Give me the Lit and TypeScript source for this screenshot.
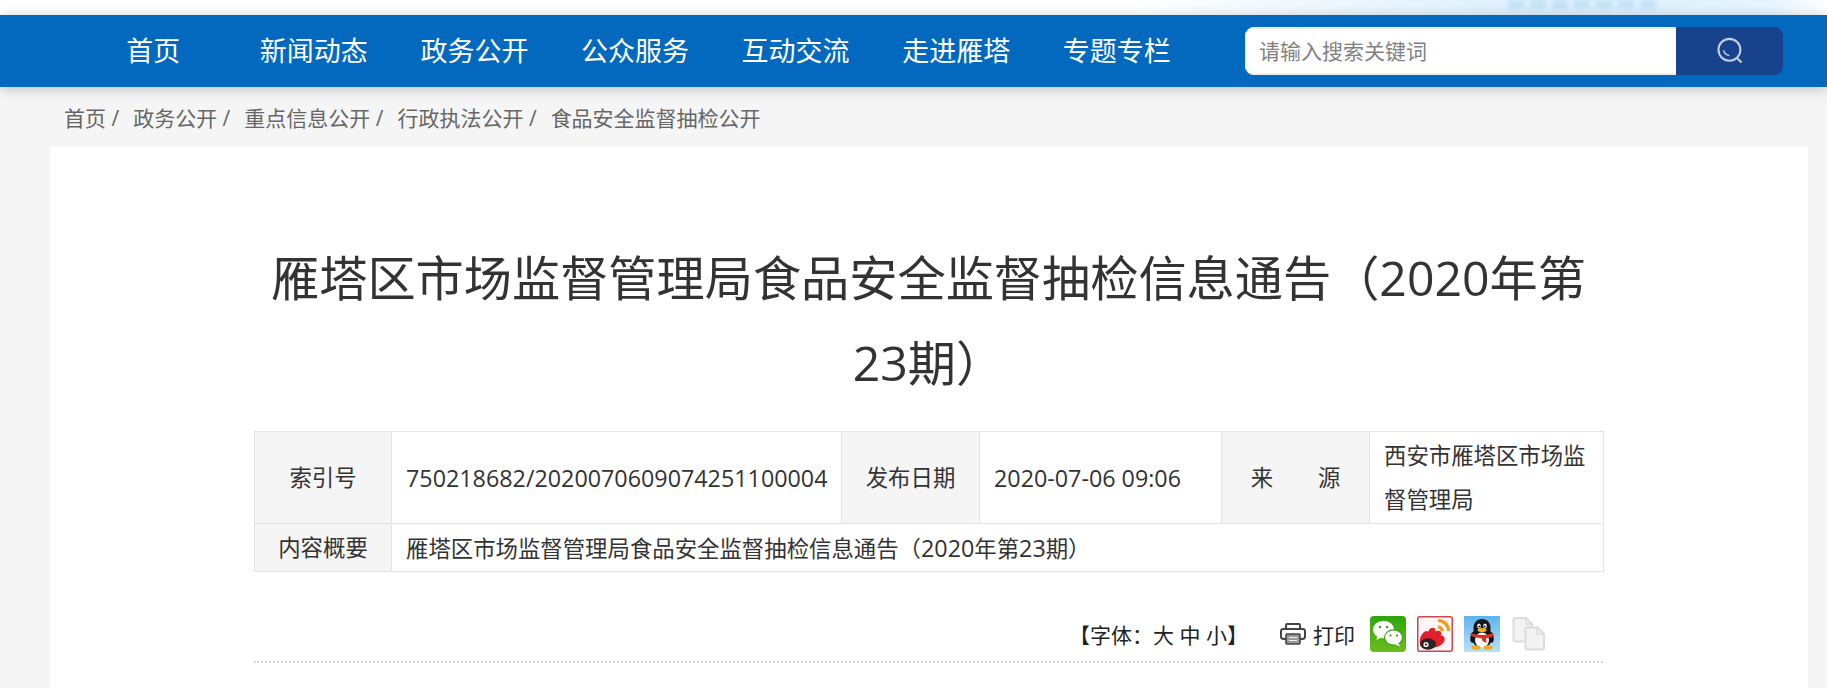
import { LitElement, html, css, svg } from "lit";
import { customElement } from "lit/decorators.js";

const NAV = ["首页", "新闻动态", "政务公开", "公众服务", "互动交流", "走进雁塔", "专题专栏"];
const CRUMBS = ["首页", "政务公开", "重点信息公开", "行政执法公开"];

const printIcon = svg`<svg width="26" height="22" viewBox="0 0 26 22" fill="none">
  <path d="M6 6V2.2C6 1.5 6.5 1 7.2 1h11.6c.7 0 1.2.5 1.2 1.2V6" stroke="#444" stroke-width="2"/>
  <path d="M6 16H3.4C2 16 1 15 1 13.6V8.4C1 7 2 6 3.4 6h19.2C24 6 25 7 25 8.4v5.2c0 1.4-1 2.4-2.4 2.4H20" stroke="#444" stroke-width="2"/>
  <rect x="6" y="11" width="14" height="10" rx="1" fill="#999" stroke="#444" stroke-width="1.6"/>
  <path d="M9 14.5h8M9 17.5h8" stroke="#eee" stroke-width="1.2"/>
</svg>`;

const wechatIcon = svg`<svg width="36" height="36" viewBox="0 0 36 36">
  <defs><linearGradient id="wg" x1="0" y1="0" x2="0" y2="1"><stop offset="0" stop-color="#2ba60c"/><stop offset="1" stop-color="#6cbd1f"/></linearGradient></defs>
  <rect width="36" height="36" rx="4" fill="url(#wg)"/>
  <ellipse cx="13.5" cy="13.5" rx="10.5" ry="8.8" fill="#fff"/>
  <path d="M7.5 19l-1 5 5.5-3z" fill="#fff"/>
  <ellipse cx="23.5" cy="21.5" rx="9" ry="7.6" stroke="#3aa512" stroke-width="1.2" fill="#fff"/>
  <path d="M28 27l2.5 3.5-6.5-2.5z" fill="#fff"/>
  <circle cx="10" cy="11" r="1.2" fill="#3a8f20"/><circle cx="17" cy="11" r="1.2" fill="#3a8f20"/>
  <circle cx="20.5" cy="19.5" r="1.1" fill="#3a8f20"/><circle cx="27" cy="19.5" r="1.1" fill="#3a8f20"/>
</svg>`;

const weiboIcon = svg`<svg width="36" height="36" viewBox="0 0 36 36" fill="none">
  <rect x=".75" y=".75" width="34.5" height="34.5" rx="2" fill="#fdf6f6" stroke="#c8474f" stroke-width="1.5"/>
  <path d="M21 4.500c6 0 10.500 4.500 10.500 10.500" stroke="#f59a1c" stroke-width="3.200"/>
  <path d="M21 11c2.500 0 4 1.500 4 4" stroke="#f59a1c" stroke-width="3"/>
  <path d="M3 28c-1-6 2-11 5-12.500 1.500-.8 2.500-.5 3 .5 1-2.500 3-5 6-4 1.500.5 1.800 2 1.200 3.500 2-1 5-1 5.800.5.700 1.200.2 2.500-.5 3.500 2.500-.2 4.500 1.500 4 4.500-.5 4-7 8-13 8-4.500 0-10-1-11.500-4z" fill="#e2202c"/>
  <ellipse cx="11" cy="28" rx="8" ry="5.800" fill="#2b2326"/>
  <circle cx="9" cy="28.500" r="2.600" fill="#f0f0f0"/>
  <circle cx="9" cy="28.500" r="1.100" fill="#222"/>
</svg>`;

const qqIcon = svg`<svg width="36" height="36" viewBox="0 0 36 36">
  <defs><linearGradient id="qg" x1="0" y1="0" x2="0" y2="1"><stop offset="0" stop-color="#5cb4ee"/><stop offset="1" stop-color="#b8e2fb"/></linearGradient></defs>
  <rect width="36" height="36" fill="url(#qg)"/>
  <ellipse cx="9.500" cy="21" rx="3" ry="6" fill="#14161a" transform="rotate(14 9.500 21)"/>
  <ellipse cx="26.500" cy="21" rx="3" ry="6" fill="#14161a" transform="rotate(-14 26.500 21)"/>
  <path d="M18 3c5.500 0 8.500 4 8.500 9v14c0 3-3.500 5-8.500 5s-8.500-2-8.500-5V12c0-5 3-9 8.500-9z" fill="#14161a"/>
  <ellipse cx="18" cy="24" rx="7" ry="7.500" fill="#fff"/>
  <ellipse cx="15" cy="10" rx="1.800" ry="2.600" fill="#fff"/><ellipse cx="21" cy="10" rx="1.800" ry="2.600" fill="#fff"/>
  <circle cx="15.300" cy="10.500" r="1" fill="#111"/><circle cx="20.700" cy="10.500" r="1" fill="#111"/>
  <ellipse cx="18" cy="14" rx="4.500" ry="2" fill="#f5b31c"/>
  <path d="M7 17c5 2.500 17 2.500 22 0 1 0 1 2.500 0 3-2 1.500-5.500 2-7 2.200l.5 4.800-4-2-1-2.800c-3 0-8-1-10.500-2.700-1-.7-1-2.500 0-2.500z" fill="#e0301e"/>
  <ellipse cx="12" cy="31.500" rx="4.500" ry="2.200" fill="#f5a81c"/><ellipse cx="24" cy="31.500" rx="4.500" ry="2.200" fill="#f5a81c"/>
</svg>`;

const copyIcon = svg`<svg width="36" height="36" viewBox="0 0 36 36">
  <path d="M2.500 3.500c0-1 .8-1.500 1.500-1.500h11l6 6v16c0 1-.7 1.500-1.500 1.500H4c-.8 0-1.500-.6-1.500-1.500z" fill="#f3f3f3" stroke="#dcdcdc" stroke-width="2"/>
  <path d="M14.500 13c0-1 .8-1.500 1.500-1.500h10.500l6.500 6.500v14c0 1-.7 1.500-1.500 1.500H16c-.8 0-1.500-.6-1.500-1.500z" fill="#f3f3f3" stroke="#dcdcdc" stroke-width="2"/>
  <path d="M15 2v6h6M26 11.500V18h6.500" fill="none" stroke="#dcdcdc" stroke-width="1.500"/>
</svg>`;

const searchIcon = svg`<svg width="30" height="30" viewBox="0 0 26 26" fill="none" stroke="#c3cfe3">
  <circle cx="12.500" cy="12" r="9.500" stroke-width="1.800"/>
  <path d="M19 19l4 4" stroke-width="1.800"/>
  <path d="M7.500 12.500c.5 2.500 2.500 4 5 4.500" stroke-width="1.300"/>
</svg>`;

@customElement("app-root")
export class AppRoot extends LitElement {
  static styles = css`
    :host {
      display: block;
      height: 688px;
      overflow: hidden;
      background: #f5f5f5;
      font-family: "Open Sans", "Noto Sans CJK SC", sans-serif;
    }
    .top {
      height: 15px;
      background: linear-gradient(90deg, #fff 0%, #fff 62%, #eaf5fd 75%, #dcf0fd 85%, #e6f4fe 97%, #fff 100%);
      position: relative;
      overflow: hidden;
    }
    .top-art {
      position: absolute;
      left: 1508px;
      top: 0;
      width: 150px;
      height: 9px;
      background: repeating-linear-gradient(90deg, #c4e2f6 0 16px, #dcf0fd 16px 22px);
      filter: blur(2px);
    }
    .nav {
      height: 72px;
      background: #0369bf;
      box-shadow: 0 2px 12px rgba(0, 0, 0, 0.22);
      display: flex;
      align-items: center;
      padding-left: 73px;
      position: relative;
    }
    .nav-items { display: flex; width: 1124px; }
    .nav-items a {
      flex: 1;
      text-align: center;
      color: #fff;
      font-size: 27px;
      line-height: 72px;
    }
    .search {
      margin-left: 48px;
      width: 538px;
      height: 48px;
      display: flex;
      border-radius: 9px;
      overflow: hidden;
    }
    .search .input {
      flex: 1;
      background: #fff;
      border-top: 2px solid #e9eef0;
      border-left: 1px solid #e9eef0;
      border-bottom: 2px solid #eee;
      box-sizing: border-box;
      padding-left: 13px;
      color: #83817f;
      font-size: 21px;
      line-height: 44px;
    }
    .search .btn {
      width: 107px;
      background: #17438c;
      display: flex;
      align-items: center;
      justify-content: center;
    }
    .crumbs {
      display: flex;
      height: 60px;
      align-items: center;
      padding-left: 64px;
      font-size: 21px;
      color: #666;
      white-space: pre;
    }
    .crumbs span { margin-right: 14px; }
    .card {
      margin: 0 19px 0 50px;
      background: #fff;
      padding: 88px 205px 0 204px;
      height: 600px;
    }
    h1 {
      margin: 0;
      font-weight: 400;
      font-size: 48.200px;
      line-height: 85px;
      color: #333;
      text-align: center;
    }
    table {
      margin-top: 26px;
      width: 1349px;
      table-layout: fixed;
      border-collapse: collapse;
      font-size: 22.400px;
      color: #333;
    }
    td {
      border: 1px solid #e3e3e3;
      padding: 1px 14px 0;
      line-height: 44px;
    }
    td.k { background: #f5f5f5; text-align: center; padding: 1px 0 0; }
    .num { font-size: 23.300px; }
    .r1 { height: 92px; }
    .r2 { height: 48px; }
    .tools {
      height: 91px;
      border-bottom: 2px dotted #d5d5d5;
      display: flex;
      align-items: center;
      font-size: 21px;
      color: #222;
      box-sizing: border-box;
      padding: 35px 0 0 815px;
    }
    .font { width: 211px; white-space: pre; }
    .print { display: flex; align-items: center; gap: 7px; width: 90px; }
    .print svg { flex: none; }
    .share { display: flex; gap: 11px; }
    .share svg { display: block; }
  `;

  render() {
    return html`
      <div class="top"><div class="top-art"></div></div>
      <nav class="nav">
        <div class="nav-items">${NAV.map((n) => html`<a>${n}</a>`)}</div>
        <div class="search">
          <div class="input">请输入搜索关键词</div>
          <div class="btn">${searchIcon}</div>
        </div>
      </nav>
      <div class="crumbs">
        ${CRUMBS.map((c) => html`<span>${c} /</span>`)}<span>食品安全监督抽检公开</span>
      </div>
      <main class="card">
        <h1>雁塔区市场监督管理局食品安全监督抽检信息通告（2020年第23期）</h1>
        <table>
          <colgroup>
            <col style="width:137px" /><col style="width:450px" /><col style="width:138px" />
            <col style="width:242px" /><col style="width:148px" /><col style="width:234px" />
          </colgroup>
          <tr class="r1">
            <td class="k">索引号</td>
            <td><span class="num">750218682/2020070609074251100004</span></td>
            <td class="k">发布日期</td>
            <td><span class="num">2020-07-06 09:06</span></td>
            <td class="k">来&emsp;&emsp;源</td>
            <td>西安市雁塔区市场监督管理局</td>
          </tr>
          <tr class="r2">
            <td class="k">内容概要</td>
            <td colspan="5">雁塔区市场监督管理局食品安全监督抽检信息通告（<span class="num">2020</span>年第<span class="num">23</span>期）</td>
          </tr>
        </table>
        <div class="tools">
          <div class="font">【字体：大 中 小】</div>
          <div class="print">${printIcon}<span>打印</span></div>
          <div class="share">${wechatIcon}${weiboIcon}${qqIcon}${copyIcon}</div>
        </div>
      </main>
    `;
  }
}
